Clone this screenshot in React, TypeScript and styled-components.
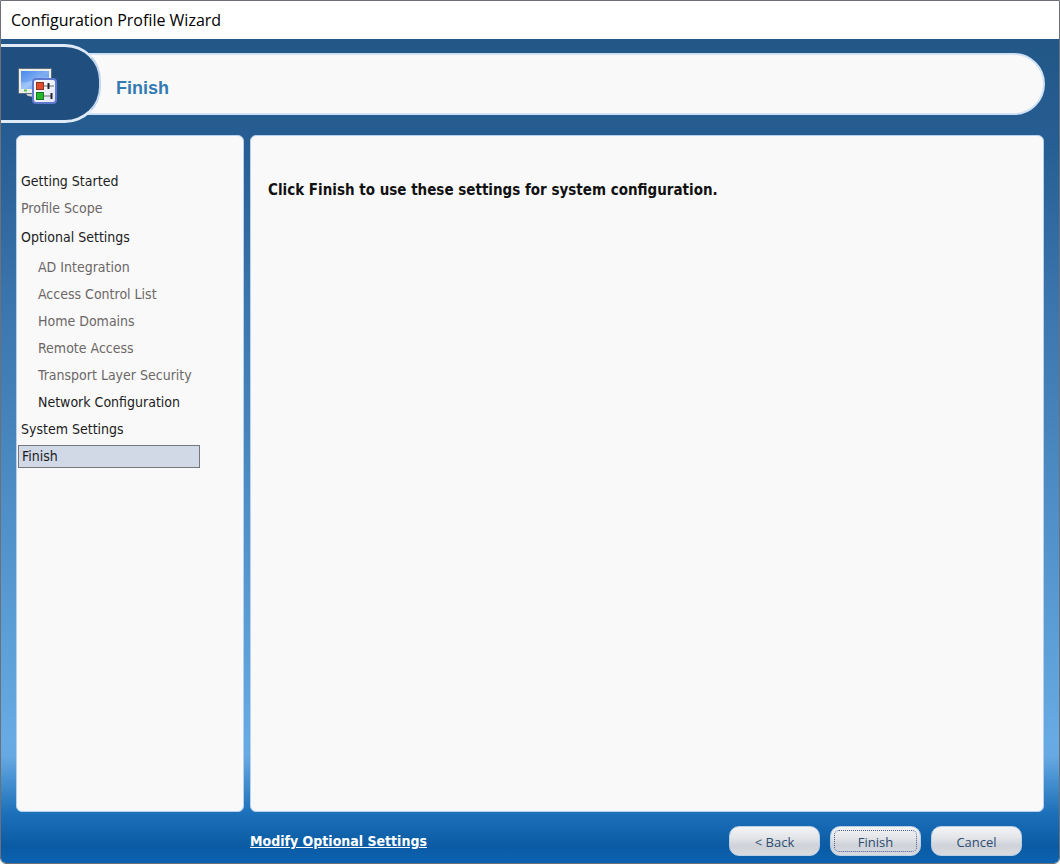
import React from 'react';
import styled, { createGlobalStyle } from 'styled-components';

const uiFont = '"DejaVu Sans Condensed", "DejaVu Sans", Tahoma, sans-serif';

const GlobalStyle = createGlobalStyle`
  *, *::before, *::after { box-sizing: border-box; }
  body { margin: 0; background: #fff; }
`;

const Window = styled.div`
  display: flex;
  flex-direction: column;
  min-height: 100vh;
  border: 1px solid #6d7076;
  border-radius: 0 0 6px 6px;
  overflow: hidden;
  font-family: ${uiFont};
  font-size: 14px;
  color: #1c1c22;
`;

const TitleBar = styled.header`
  padding: 0 10px;
  background: #fff;
  color: #000;
  font-family: "Open Sans", "Noto Sans", sans-serif;
  font-size: 16px;
  line-height: 38px;
`;

const Frame = styled.div`
  flex: 1;
  display: flex;
  flex-direction: column;
  background: linear-gradient(
    to bottom,
    #225787 0,
    #265d92 12%,
    #3a74ac 31%,
    #5393cb 62%,
    #67abe4 85%,
    #66a9e2 87%,
    #1c70b9 94%,
    #0a5ba4 98%,
    #0b62b0 100%
  );
`;

const Banner = styled.div`
  display: flex;
  align-items: center;
  padding: 5px 14px 0 0;
`;

const BannerTab = styled.div`
  z-index: 1;
  display: flex;
  align-items: center;
  width: 100px;
  height: 79px;
  padding: 4px 0 0 16px;
  border: solid #dfebf8;
  border-width: 3px 2px 3px 0;
  border-right-color: #c3d8ee;
  border-radius: 0 36px 36px 0;
  background: #1f4e7f;
`;

const BannerPill = styled.div`
  flex: 1;
  height: 62px;
  margin-left: -24px;
  padding: 8px 37px 0;
  border: 2px solid #cfe1f4;
  border-radius: 0 31px 31px 0;
  background: #f9f9f9;
`;

const Heading = styled.h1`
  margin: 0;
  color: #347bb2;
  font-family: "Liberation Sans", Arial, sans-serif;
  font-size: 18px;
  font-weight: bold;
  line-height: 50px;
`;

const Panels = styled.div`
  flex: 1;
  display: flex;
  gap: 6px;
  padding: 12px 15px 0;
`;

const panel = `
  border: 1px solid #b5d1ee;
  border-radius: 6px;
  background: #f9f9f9;
`;

const Steps = styled.nav`
  ${panel}
  flex: 0 0 228px;
`;

const StepList = styled.ol`
  margin: 0;
  padding: 32px 0 0 1px;
  list-style: none;
`;

const Step = styled.li<{ $muted?: boolean; $nested?: boolean; $group?: boolean }>`
  margin: ${p => (p.$group ? '2px 0 3px' : '0')};
  padding-left: ${p => (p.$nested ? 20 : 3)}px;
  line-height: 27px;
  color: ${p => (p.$muted ? '#6c6767' : '#1c1c22')};
`;

const CurrentStep = styled.li`
  width: 182px;
  margin-top: 2px;
  padding-left: 3px;
  border: 1px solid #74777d;
  background: #d2d9e6;
  line-height: 21px;
`;

const Content = styled.main`
  ${panel}
  flex: 1;
  padding: 43px 17px;
`;

const Message = styled.p`
  margin: 0;
  color: #111;
  font-size: 15px;
  font-weight: bold;
  line-height: 22px;
`;

const Footer = styled.footer`
  display: flex;
  align-items: center;
  justify-content: space-between;
  padding: 14px 37px 7px 249px;
`;

const FooterLink = styled.a`
  color: #fff;
  font-weight: bold;
  text-decoration: underline;
`;

const Actions = styled.div`
  display: flex;
  gap: 10px;
`;

const ActionButton = styled.button<{ $focused?: boolean }>`
  position: relative;
  width: 91px;
  height: 30px;
  padding: 2px 0 0;
  border: 1px solid #b9cfe6;
  border-radius: 10px;
  background: linear-gradient(to bottom, #f4f4f5 0, #e2e4e7 40%, #cfd3d9 65%, #d8dbdf 100%);
  color: #2e4c70;
  font-family: "Open Sans", "Noto Sans", sans-serif;
  font-size: 13px;
  line-height: 26px;

  &::after {
    content: '';
    display: ${p => (p.$focused ? 'block' : 'none')};
    position: absolute;
    inset: 3px;
    border: 1px dotted #4c5c9c;
    border-radius: 5px;
  }
`;

function WizardIcon() {
  return (
    <svg width="40" height="38" viewBox="0 0 40 38" aria-hidden="true">
      <defs>
        <linearGradient id="screen" x1="0" y1="0" x2="1" y2="1">
          <stop offset="0" stopColor="#4f8ef0" />
          <stop offset="0.5" stopColor="#a3c8fa" />
          <stop offset="1" stopColor="#5b93ea" />
        </linearGradient>
        <linearGradient id="card" x1="0" y1="0" x2="1" y2="1">
          <stop offset="0" stopColor="#ffffff" />
          <stop offset="1" stopColor="#dfe3f6" />
        </linearGradient>
      </defs>
      <path d="M8 26h9v4l-6-1z" fill="#cdd2d4" />
      <rect x="1.5" y="1.5" width="33" height="25" rx="1" fill="#eceee8" stroke="#5d6d7c" />
      <rect x="4" y="4" width="28" height="18" fill="url(#screen)" />
      <path d="M4 15c8 2 16-5 28-5V4H4z" fill="#3f7fe6" opacity="0.35" />
      <path d="M7 23.5h3" stroke="#55c34c" strokeWidth="2" />
      <rect x="16" y="12" width="23" height="24" rx="3" fill="url(#card)" stroke="#5f79cf" strokeWidth="2" />
      <rect x="19.5" y="15.5" width="7" height="7" fill="#e44a2c" stroke="#8e3324" />
      <rect x="19.5" y="25.5" width="7" height="7" fill="#26b52c" stroke="#187a20" />
      <path d="M27 19h10M27 29h8" stroke="#6b6a72" strokeWidth="1" fill="none" />
      <path d="M31.5 16v6M34.5 26v6" stroke="#26252e" strokeWidth="2" fill="none" />
    </svg>
  );
}

const steps = [
  { label: 'Getting Started' },
  { label: 'Profile Scope', muted: true },
  { label: 'Optional Settings', group: true },
  { label: 'AD Integration', muted: true, nested: true },
  { label: 'Access Control List', muted: true, nested: true },
  { label: 'Home Domains', muted: true, nested: true },
  { label: 'Remote Access', muted: true, nested: true },
  { label: 'Transport Layer Security', muted: true, nested: true },
  { label: 'Network Configuration', nested: true },
  { label: 'System Settings' },
];

export default function App() {
  return (
    <>
      <GlobalStyle />
      <Window>
        <TitleBar>Configuration Profile Wizard</TitleBar>
        <Frame>
          <Banner>
            <BannerTab>
              <WizardIcon />
            </BannerTab>
            <BannerPill>
              <Heading>Finish</Heading>
            </BannerPill>
          </Banner>
          <Panels>
            <Steps aria-label="Wizard steps">
              <StepList>
                {steps.map(s => (
                  <Step key={s.label} $muted={s.muted} $nested={s.nested} $group={s.group}>
                    {s.label}
                  </Step>
                ))}
                <CurrentStep aria-current="step">Finish</CurrentStep>
              </StepList>
            </Steps>
            <Content>
              <Message>Click Finish to use these settings for system configuration.</Message>
            </Content>
          </Panels>
          <Footer>
            <FooterLink href="#optional-settings">Modify Optional Settings</FooterLink>
            <Actions>
              <ActionButton type="button">&lt; Back</ActionButton>
              <ActionButton type="button" $focused>Finish</ActionButton>
              <ActionButton type="button">Cancel</ActionButton>
            </Actions>
          </Footer>
        </Frame>
      </Window>
    </>
  );
}
